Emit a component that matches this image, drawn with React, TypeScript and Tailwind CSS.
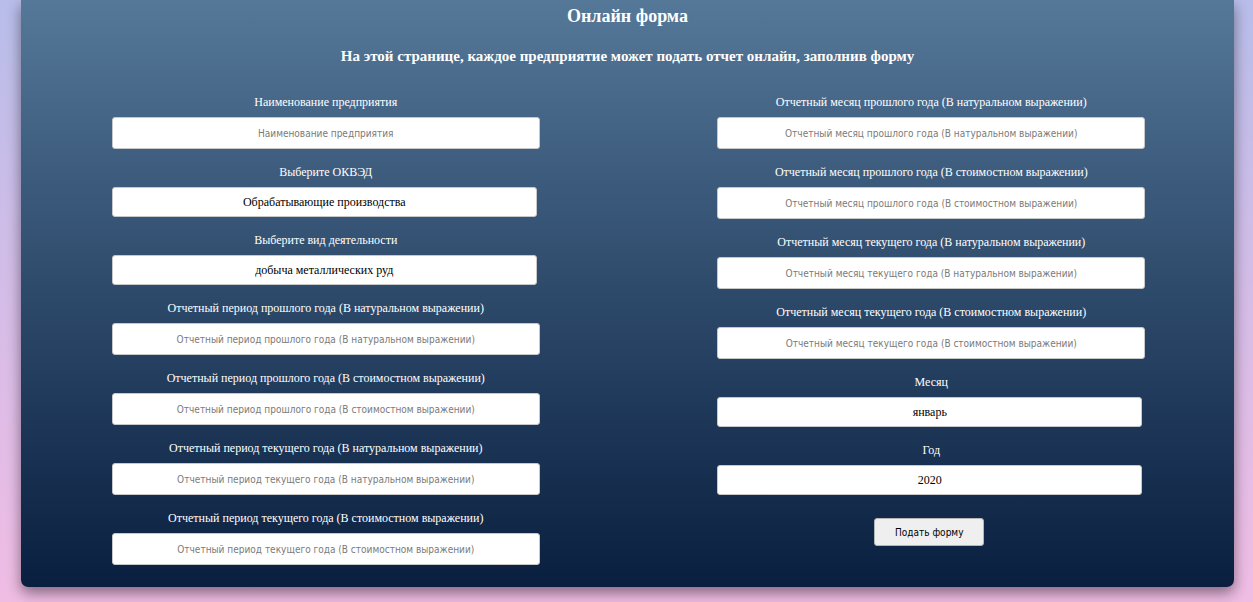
import React from "react";

const serif = { fontFamily: '"Liberation Serif", "Times New Roman", serif' };
const sans = { fontFamily: '"DejaVu Sans Condensed", Tahoma, "DejaVu Sans", sans-serif' };

const leftFields: { label: string; kind: "input" | "select"; value?: string }[] = [
  { label: "Наименование предприятия", kind: "input" },
  { label: "Выберите ОКВЭД", kind: "select", value: "Обрабатывающие производства" },
  { label: "Выберите вид деятельности", kind: "select", value: "добыча металлических руд" },
  { label: "Отчетный период прошлого года (В натуральном выражении)", kind: "input" },
  { label: "Отчетный период прошлого года (В стоимостном выражении)", kind: "input" },
  { label: "Отчетный период текущего года (В натуральном выражении)", kind: "input" },
  { label: "Отчетный период текущего года (В стоимостном выражении)", kind: "input" },
];

const rightFields: { label: string; kind: "input" | "select"; value?: string }[] = [
  { label: "Отчетный месяц прошлого года (В натуральном выражении)", kind: "input" },
  { label: "Отчетный месяц прошлого года (В стоимостном выражении)", kind: "input" },
  { label: "Отчетный месяц текущего года (В натуральном выражении)", kind: "input" },
  { label: "Отчетный месяц текущего года (В стоимостном выражении)", kind: "input" },
  { label: "Месяц", kind: "select", value: "январь" },
  { label: "Год", kind: "select", value: "2020" },
];

function Field({ label, kind, value }: { label: string; kind: "input" | "select"; value?: string }) {
  return (
    <div className="flex flex-col items-center">
      <div className="w-[428px] flex flex-col items-center">
        <label className="text-[12px] leading-4 text-white mb-[7px]" style={serif}>
          {label}
        </label>
        {kind === "input" ? (
          <input
            placeholder={label}
            className="w-[428px] h-8 bg-white rounded-[3px] border border-[#c8c8c8] text-center text-[10px] text-[#555] placeholder:text-[#7a7a7a] outline-none"
            style={sans}
          />
        ) : (
          <select
            defaultValue={value}
            className="self-start w-[425px] h-[30px] bg-white rounded-[3px] border border-[#c8c8c8] text-center [text-align-last:center] text-[12px] text-black appearance-none outline-none"
            style={serif}
          >
            <option value={value}>{value}</option>
          </select>
        )}
      </div>
    </div>
  );
}

export default function App() {
  return (
    <div className="min-h-[602px] w-full bg-gradient-to-b from-[#b8bdea] to-[#f0bce4]">
      <div className="ml-[21px] w-[1213px] h-[587px] rounded-b-[7px] bg-gradient-to-b from-[#557899] to-[#0a1f3f] shadow-[0_6px_14px_rgba(0,0,0,0.45)] pt-[5px]">
        <h1 className="text-center text-white font-bold text-[18px] leading-[22px]" style={serif}>
          Онлайн форма
        </h1>
        <h2 className="mt-[19px] text-center text-white font-bold text-[15px] leading-[20px]" style={serif}>
          На этой странице, каждое предприятие может подать отчет онлайн, заполнив форму
        </h2>
        <div className="grid grid-cols-2 pl-[2px] mt-[28px]">
          <div className="flex flex-col gap-[15px]">
            {leftFields.map((f) => (
              <Field key={f.label} {...f} />
            ))}
          </div>
          <div className="flex flex-col gap-[15px]">
            {rightFields.map((f) => (
              <Field key={f.label} {...f} />
            ))}
            <div className="flex justify-center mt-[8px] pr-[4px]">
              <button
                className="w-[110px] h-7 bg-[#efefef] border border-[#b5b5b5] rounded-[3px] text-[10px] text-black"
                style={sans}
              >
                Подать форму
              </button>
            </div>
          </div>
        </div>
      </div>
    </div>
  );
}
